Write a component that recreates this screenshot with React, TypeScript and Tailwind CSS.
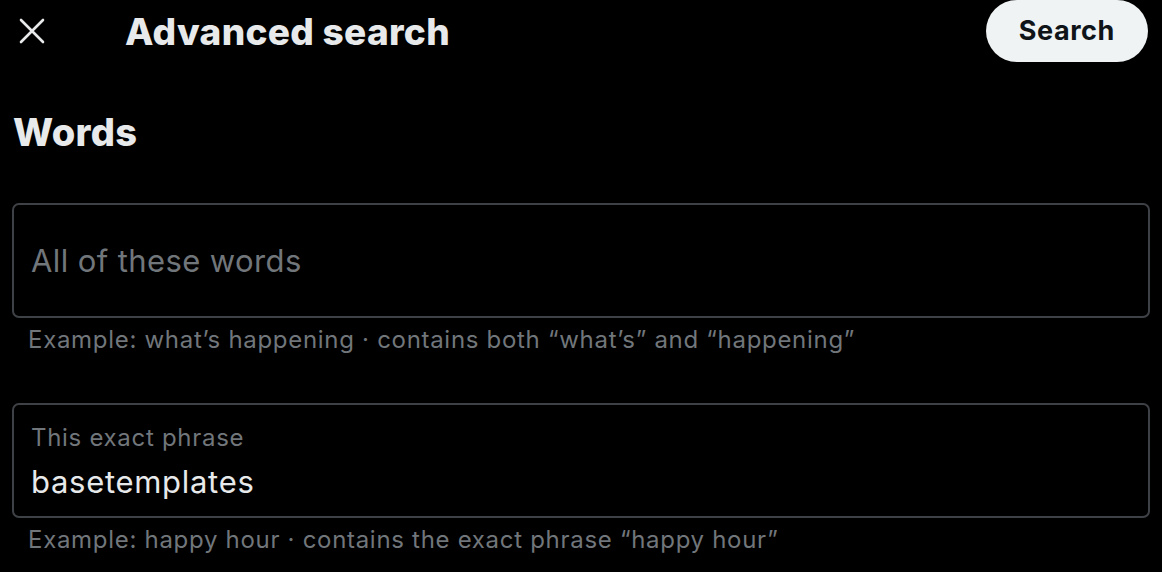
import React, { useState } from 'react';

const font = { fontFamily: 'Inter, "Noto Sans", "Liberation Sans", sans-serif' };

export default function App() {
    const [allWords, setAllWords] = useState('');
    const [phrase, setPhrase] = useState('basetemplates');

    return (
        <div className="w-[1162px] h-[572px] bg-black text-[#e7e9ea] overflow-hidden" style={font}>
            {/* Header */}
            <div className="flex items-center h-[62px] pr-[14px]">
                <button className="w-[64px] h-[62px] flex items-center justify-center text-[#e7e9ea]">
                    <svg width="26" height="26" viewBox="0 0 26 26" fill="none" stroke="currentColor" strokeWidth="2.6" strokeLinecap="round">
                        <path d="M2 2 L24 24 M24 2 L2 24" />
                    </svg>
                </button>
                <h1 className="ml-[61px] text-[37px] font-extrabold tracking-[0.3px] leading-none">Advanced search</h1>
                <div className="flex-1" />
                <button className="h-[62px] px-[33px] rounded-full bg-[#eff3f4] text-[#0f1419] text-[27px] font-bold tracking-[0.6px]">
                    Search
                </button>
            </div>

            {/* Words */}
            <div className="px-[12px]">
                <h2 className="mt-[50px] ml-[1px] text-[38px] font-extrabold tracking-[0.3px] leading-[40px]">Words</h2>

                <div className="mt-[51px]">
                    <label className="block h-[115px] rounded-[7px] border-2 border-[#3e4145] px-[17px] pt-[2px] flex items-center">
                        <input
                            className="w-full bg-transparent outline-none text-[31px] tracking-[0.4px] text-[#e7e9ea] placeholder:text-[#71767b]"
                            placeholder="All of these words"
                            value={allWords}
                            onChange={(e) => setAllWords(e.target.value)}
                        />
                    </label>
                    <p className="mt-[6px] ml-[16px] text-[24px] tracking-[0.7px] leading-[32px] text-[#71767b]">
                        Example: what’s happening · contains both “what’s” and “happening”
                    </p>
                </div>

                <div className="mt-[47px]">
                    <label className="block h-[115px] rounded-[7px] border-2 border-[#3e4145] px-[17px] pt-[18px]">
                        <span className="block text-[24px] tracking-[0.7px] leading-[30px] text-[#71767b]">This exact phrase</span>
                        <input
                            className="w-full mt-[9px] bg-transparent outline-none text-[31px] tracking-[0.7px] leading-[40px] text-[#e7e9ea]"
                            value={phrase}
                            onChange={(e) => setPhrase(e.target.value)}
                        />
                    </label>
                    <p className="mt-[6px] ml-[16px] text-[24px] tracking-[0.7px] leading-[32px] text-[#71767b]">
                        Example: happy hour · contains the exact phrase “happy hour”
                    </p>
                </div>
            </div>
        </div>
    );
}
